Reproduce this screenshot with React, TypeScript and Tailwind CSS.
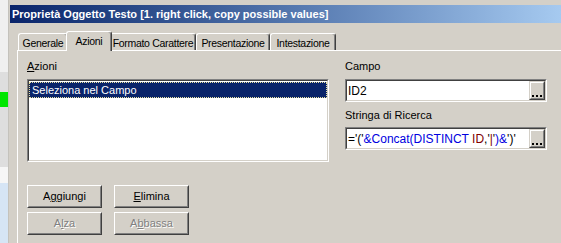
const font = 'font-["Liberation_Sans",Arial,sans-serif]'

function Tab({ label, w, active }: { label: string; w: number; active?: boolean }) {
  return (
    <div
      style={{ width: w }}
      className={`shrink-0 flex justify-center whitespace-nowrap tracking-[-0.3px] border-l border-t border-white border-r border-r-[#404040] rounded-t-[3px] shadow-[inset_-1px_0_#808080] bg-[#d4d0c8] text-[10.5px] text-black ${
        active ? 'relative z-10 -mx-[2px] -mb-px h-[20px] pt-[2px]' : 'h-[17px] pt-[2px]'
      }`}
    >
      {label}
    </div>
  )
}

function Sunken({ className, children }: { className?: string; children?: React.ReactNode }) {
  return (
    <div className={`border border-[#808080] border-r-white border-b-white ${className ?? ''}`}>
      <div className="h-full border border-[#404040] border-r-[#d4d0c8] border-b-[#d4d0c8] bg-white">
        {children}
      </div>
    </div>
  )
}

function Btn({ children, disabled }: { children: React.ReactNode; disabled?: boolean }) {
  return (
    <div className="w-[75px] h-[23px] border border-white border-r-[#404040] border-b-[#404040]">
      <div
        className={`h-full flex items-center justify-center border border-[#d4d0c8] border-r-[#808080] border-b-[#808080] text-[11px] ${
          disabled ? 'text-[#808080] [text-shadow:1px_1px_0_#fff]' : 'text-black'
        }`}
      >
        {children}
      </div>
    </div>
  )
}

function Field({ children }: { children: React.ReactNode }) {
  return (
    <Sunken className="w-[202px] h-[23px]">
      <div className="h-full flex items-center">
        <div className="flex-1 pl-[1px] text-[12px] whitespace-nowrap overflow-hidden">{children}</div>
        <div className="w-[16px] h-[19px] border border-[#d4d0c8] border-r-[#404040] border-b-[#404040] bg-[#d4d0c8]">
          <div className="h-full border border-white border-r-[#808080] border-b-[#808080] flex items-end justify-center pb-[1px]">
            <div className="flex gap-[2px]">
              <div className="w-[2px] h-[2px] bg-black" />
              <div className="w-[2px] h-[2px] bg-black" />
              <div className="w-[2px] h-[2px] bg-black" />
            </div>
          </div>
        </div>
      </div>
    </Sunken>
  )
}

export default function App() {
  return (
    <div className={`w-[561px] h-[243px] overflow-hidden flex bg-[#d4d0c8] ${font}`}>
      {/* strip of the window behind */}
      <div className="w-[8px] flex flex-col shrink-0">
        <div className="h-[72px] bg-[#f0f0f0]" />
        <div className="h-[20px] bg-[#dedede]" />
        <div className="h-[15px] bg-[#00e600]" />
        <div className="h-[60px] bg-[#dedede]" />
        <div className="h-[16px] bg-[#f6f6f6]" />
        <div className="flex-1 bg-[#d6e5f5]" />
      </div>
      <div className="w-px bg-[#c4c2bc] shrink-0" />

      <div className="flex-1 flex flex-col pt-[5px] pl-px">
        <div className="h-[18px] flex items-center pl-[2px] bg-gradient-to-r from-[#0a246a] to-[#a6caf0] text-white text-[11px] font-bold whitespace-nowrap">
          Proprietà Oggetto Testo [1. right click, copy possible values]
        </div>

        <div className="mt-[8px] ml-[7px] flex flex-col flex-1">
          <div className="flex items-end h-[19px] pl-px">
            <Tab label="Generale" w={50} />
            <Tab label="Azioni" w={46} active />
            <Tab label="Formato Carattere" w={86} />
            <Tab label="Presentazione" w={74} />
            <Tab label="Intestazione" w={66} />
          </div>

          <div className="flex-1 border-l border-t border-white pl-[9px] pt-[9px] text-[11px] text-black">
            <div className="flex gap-[16px]">
              <div className="flex flex-col">
                <div className="h-[13px] leading-[13px]">
                  <span className="underline">A</span>zioni
                </div>
                <Sunken className="mt-[6px] w-[302px] h-[83px]">
                  <div className="h-[16px] mt-px bg-[#0a246a] border border-dotted border-[#e8e0a0] text-white leading-[14px] pl-[2px]">
                    Seleziona nel Campo
                  </div>
                </Sunken>
              </div>

              <div className="flex flex-col">
                <div className="h-[13px] leading-[13px]">Campo</div>
                <div className="mt-[6px]">
                  <Field>ID2</Field>
                </div>
                <div className="mt-[7px] h-[13px] leading-[13px]">Stringa di Ricerca</div>
                <div className="mt-[5px]">
                  <Field>
                    <span>=&apos;(&apos;</span>
                    <span className="text-[#0000e0]">&amp;Concat(DISTINCT </span>
                    <span className="text-[#800000]">ID</span>
                    <span>,&apos;</span>
                    <span className="text-[#800000]">|</span>
                    <span>&apos;</span>
                    <span className="text-[#0000e0]">)&amp;</span>
                    <span>&apos;)&apos;</span>
                  </Field>
                </div>
              </div>
            </div>

            <div className="mt-[23px] flex flex-col gap-[4px]">
              <div className="flex gap-[12px]">
                <Btn>
                  A<span className="underline">g</span>giungi
                </Btn>
                <Btn>
                  <span className="underline">E</span>limina
                </Btn>
              </div>
              <div className="flex gap-[12px]">
                <Btn disabled>
                  A<span className="underline">l</span>za
                </Btn>
                <Btn disabled>
                  A<span className="underline">b</span>bassa
                </Btn>
              </div>
            </div>
          </div>
        </div>
      </div>
    </div>
  )
}
